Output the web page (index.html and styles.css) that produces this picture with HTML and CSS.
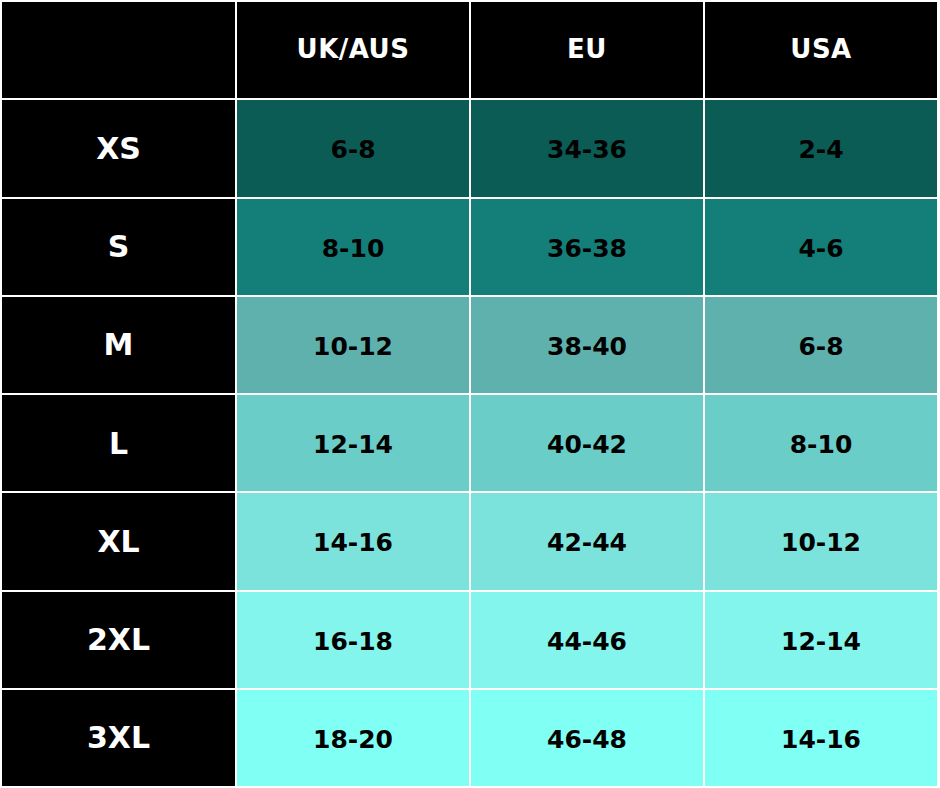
FILE: index.html
```html
<!DOCTYPE html>
<html>
<head>
<meta charset="utf-8">
<link rel="stylesheet" href="styles.css">
</head>
<body>
<div class="chart">
  <div class="cell head"></div>
  <div class="cell head">UK/AUS</div>
  <div class="cell head">EU</div>
  <div class="cell head">USA</div>

  <div class="cell label">XS</div>
  <div class="cell val r1">6-8</div>
  <div class="cell val r1">34-36</div>
  <div class="cell val r1">2-4</div>

  <div class="cell label">S</div>
  <div class="cell val r2">8-10</div>
  <div class="cell val r2">36-38</div>
  <div class="cell val r2">4-6</div>

  <div class="cell label">M</div>
  <div class="cell val r3">10-12</div>
  <div class="cell val r3">38-40</div>
  <div class="cell val r3">6-8</div>

  <div class="cell label">L</div>
  <div class="cell val r4">12-14</div>
  <div class="cell val r4">40-42</div>
  <div class="cell val r4">8-10</div>

  <div class="cell label">XL</div>
  <div class="cell val r5">14-16</div>
  <div class="cell val r5">42-44</div>
  <div class="cell val r5">10-12</div>

  <div class="cell label">2XL</div>
  <div class="cell val r6">16-18</div>
  <div class="cell val r6">44-46</div>
  <div class="cell val r6">12-14</div>

  <div class="cell label">3XL</div>
  <div class="cell val r7">18-20</div>
  <div class="cell val r7">46-48</div>
  <div class="cell val r7">14-16</div>
</div>
</body>
</html>
```

FILE: styles.css
```css
html, body {
  margin: 0;
  padding: 0;
  background: #ffffff;
}

.chart {
  box-sizing: border-box;
  width: 940px;
  height: 788px;
  padding: 2px 3px 2px 2px;
  display: grid;
  grid-template-columns: 233px 232px 232px 232px;
  grid-template-rows: repeat(8, 1fr);
  gap: 2px;
  background: #ffffff;
  font-family: "DejaVu Sans", "Liberation Sans", sans-serif;
  font-weight: 700;
}

.cell {
  display: flex;
  align-items: center;
  justify-content: center;
}

.head {
  background: #000000;
  color: #ffffff;
  font-size: 26px;
  letter-spacing: 0.5px;
  padding-bottom: 2px;
}

.label {
  background: #000000;
  color: #ffffff;
  font-size: 30px;
}

.val {
  color: #000000;
  font-size: 25px;
  padding-top: 3px;
}

.r1 { background: #0a5c55; }
.r2 { background: #147f78; }
.r3 { background: #5fb1ad; }
.r4 { background: #6bcdc7; }
.r5 { background: #7be3dc; }
.r6 { background: #84f5ec; }
.r7 { background: #80fff5; }
```
